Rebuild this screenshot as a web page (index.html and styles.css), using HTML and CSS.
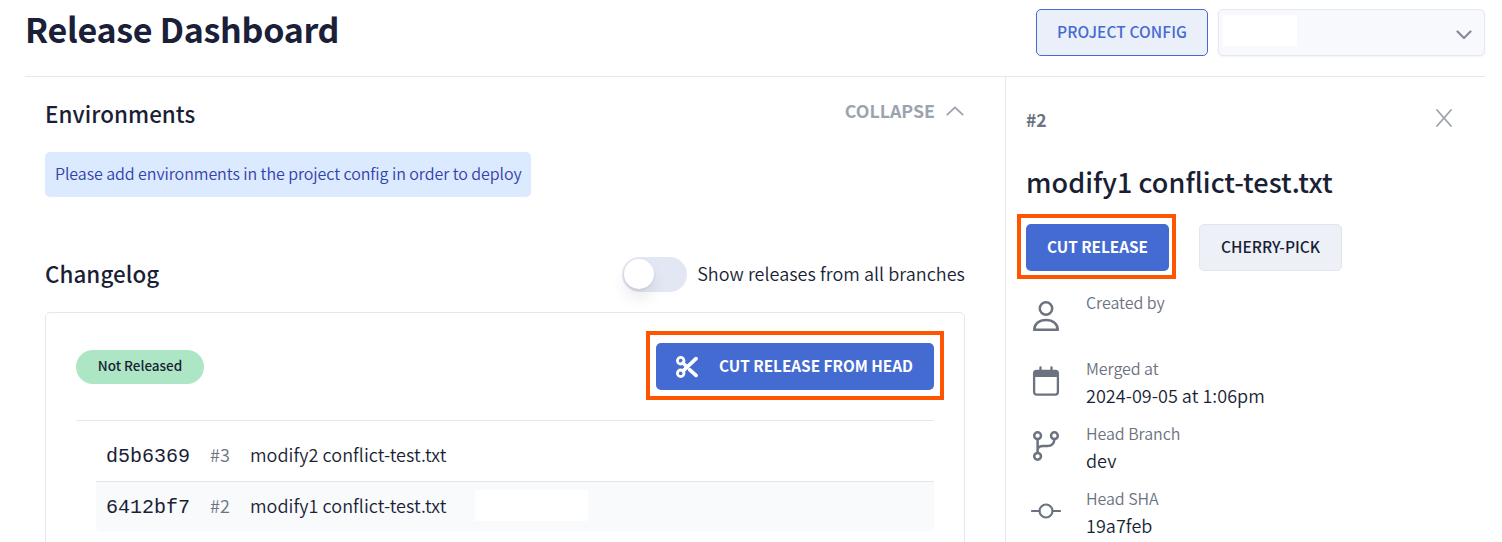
FILE: index.html
```html
<!DOCTYPE html>
<html lang="en">
<head>
<meta charset="utf-8">
<title>Release Dashboard</title>
<link rel="stylesheet" href="styles.css">
</head>
<body>
<div class="page">
  <header class="header">
    <h1 class="title">Release Dashboard</h1>
    <div class="header-actions">
      <button class="btn btn-config">PROJECT CONFIG</button>
      <div class="select">
        <span class="select-value"></span>
        <svg class="select-caret" width="16" height="10" viewBox="0 0 16 10" fill="none"><path d="M1.500 1.500 8 8l6.500-6.500" stroke="currentColor" stroke-width="2.200" stroke-linecap="round" stroke-linejoin="round"/></svg>
      </div>
    </div>
  </header>
  <div class="columns">
    <main class="main">
      <div class="section-head">
        <h2 class="heading">Environments</h2>
        <div class="collapse">
          <span class="collapse-text">COLLAPSE</span>
          <svg width="18" height="10" viewBox="0 0 18 10" fill="none"><path d="M1.300 8.700 9 1.300l7.700 7.400" stroke="currentColor" stroke-width="1.800" stroke-linecap="round" stroke-linejoin="round"/></svg>
        </div>
      </div>
      <div class="notice"><span class="notice-text">Please add environments in the project config in order to deploy</span></div>
      <div class="section-head changelog-head">
        <h2 class="heading">Changelog</h2>
        <div class="toggle-row">
          <span class="toggle"><span class="knob"></span></span>
          <span class="toggle-text">Show releases from all branches</span>
        </div>
      </div>
      <section class="card">
        <div class="card-head">
          <span class="pill"><span class="pill-text">Not Released</span></span>
          <div class="marked marked-head">
            <button class="btn btn-primary btn-head">
              <svg class="scissors" width="22" height="22" viewBox="0 0 22 22" fill="none" stroke="currentColor"><circle cx="4.700" cy="4.700" r="3.300" stroke-width="2.800"/><circle cx="4.700" cy="17.300" r="3.300" stroke-width="2.800"/><path d="M7.200 14.800 20 2.600" stroke-width="3.700" stroke-linecap="round"/><path d="m7 7 4 4M13.800 13.800l6.200 5.600" stroke-width="3.700" stroke-linecap="round"/></svg>
              <span class="head-text">CUT RELEASE FROM HEAD</span>
            </button>
          </div>
        </div>
        <div class="commits">
          <div class="commit">
            <span class="sha">d5b6369</span><span class="number">#3</span><span class="message">modify2 conflict-test.txt</span>
          </div>
          <div class="commit commit-active">
            <span class="sha">6412bf7</span><span class="number">#2</span><span class="message">modify1 conflict-test.txt</span><span class="author"></span>
          </div>
        </div>
      </section>
    </main>
    <aside class="side">
      <div class="side-top">
        <span class="side-number">#2</span>
        <svg class="close" width="16" height="18" viewBox="0 0 16 18" fill="none"><path d="m1 1 14 16M15 1 1 17" stroke="currentColor" stroke-width="1.800" stroke-linecap="round"/></svg>
      </div>
      <h2 class="side-title">modify1 conflict-test.txt</h2>
      <div class="side-actions">
        <div class="marked marked-cut"><button class="btn btn-primary btn-cut">CUT RELEASE</button></div>
        <button class="btn btn-cherry">CHERRY-PICK</button>
      </div>
      <div class="details">
        <div class="detail">
          <svg class="detail-icon" viewBox="0 0 30 30" fill="none" stroke="currentColor" stroke-width="2.500"><circle cx="15" cy="7.500" r="6.200"/><path d="M3.200 28.800C3.200 23 8 18.900 15 18.900S26.800 23 26.800 28.800Z" stroke-linejoin="round"/></svg>
          <div><div class="label label-first">Created by</div></div>
        </div>
        <div class="detail">
          <svg class="detail-icon" viewBox="0 0 30 30" fill="none" stroke="currentColor" stroke-width="2.300"><path d="M9.500 1.500V5M20.500 1.500V5" stroke-linecap="round"/><rect x="3.100" y="4.800" width="23.800" height="23.800" rx="2.500"/><path d="M3 5h24v6H3z" fill="currentColor" stroke="none"/></svg>
          <div><div class="label">Merged at</div><div class="value value-date">2024-09-05 at 1:06pm</div></div>
        </div>
        <div class="detail">
          <svg class="detail-icon" viewBox="0 0 30 30" fill="none" stroke="currentColor" stroke-width="2.500"><circle cx="6.600" cy="4.700" r="3.400"/><circle cx="23.400" cy="4.700" r="3.400"/><circle cx="6.600" cy="25.300" r="3.400"/><path d="M6.600 8v14M6.600 18.200C7.500 15.600 9.500 15 12 15h4.500c4 0 6.500-2 6.900-6.500"/></svg>
          <div><div class="label label-branch">Head Branch</div><div class="value">dev</div></div>
        </div>
        <div class="detail">
          <svg class="detail-icon" viewBox="0 0 30 30" fill="none" stroke="currentColor" stroke-width="2.100"><circle cx="15" cy="15" r="6.500"/><path d="M1 15h7.500M21.500 15H29" stroke-linecap="round"/></svg>
          <div><div class="label">Head SHA</div><div class="value">19a7feb</div></div>
        </div>
      </div>
    </aside>
  </div>
</div>
</body>
</html>
```
FILE: styles.css
```css
* { box-sizing: border-box; }
body {
  margin: 0;
  background: #fff;
  color: #1a1f36;
  font-family: "Noto Sans CJK SC", "Noto Sans", sans-serif;
}
h1, h2 { margin: 0; }
.page {
  height: 542px;
  padding: 0 17px 0 25px;
  overflow: hidden;
}
.header {
  display: flex;
  justify-content: space-between;
  height: 77px;
  border-bottom: 1px solid #e5e7eb;
}
.title {
  font-size: 34px;
  line-height: 58px;
  font-weight: 700;
  letter-spacing: -.28px;
  color: #1a2038;
  white-space: nowrap;
}
.header-actions { display: flex; gap: 10px; padding-top: 9px; }
.btn {
  height: 47px;
  padding: 0 0 4px;
  border: 1px solid transparent;
  border-radius: 5px;
  font-family: inherit;
  font-size: 15.500px;
  font-weight: 500;
  line-height: 30px;
  white-space: nowrap;
}
.btn-config {
  width: 172px;
  border-color: #446bd1;
  background: #ebeffa;
  color: #446bd1;
  letter-spacing: .1px;
}
.select {
  display: flex;
  align-items: flex-start;
  justify-content: space-between;
  width: 267px;
  height: 47px;
  padding: 5px 12px 0 4px;
  border: 1px solid #e4e8f3;
  border-radius: 5px;
  background: #f8f9fd;
  box-shadow: 0 1px 2px rgba(0, 0, 0, .05);
}
.select-value { width: 74px; height: 31px; background: #fff; }
.select-caret { margin-top: 15px; color: #858b9b; }
.columns { display: flex; }
.main { width: 980px; padding: 0 40px 0 20px; }
.section-head { display: flex; justify-content: space-between; height: 75px; }
.heading {
  padding-top: 19px;
  font-size: 22.400px;
  line-height: 34px;
  font-weight: 500;
  letter-spacing: .04px;
  white-space: nowrap;
}
.collapse {
  display: flex;
  align-items: center;
  gap: 11px;
  height: 67px;
  padding-right: 1px;
  color: #9ca3af;
}
.collapse-text { padding-bottom: 2px; font-size: 17.800px; line-height: 30px; font-weight: 700; }
.notice {
  width: 486px;
  height: 45px;
  padding: 6px 10px;
  border-radius: 5px;
  background: #dbeafe;
  color: #3341ac;
  font-size: 16px;
  line-height: 30px;
  font-weight: 350;
  letter-spacing: -.07px;
  white-space: nowrap;
}
.changelog-head { height: 75px; margin-top: 40px; }
.toggle-row { display: flex; align-items: center; gap: 10px; height: 75px; }
.toggle {
  display: flex;
  width: 65px;
  height: 35px;
  padding: 2px;
  border-radius: 18px;
  background: #e2e7f3;
}
.knob {
  width: 30px;
  height: 30px;
  border-radius: 50%;
  background: #fff;
  box-shadow: 0 10px 15px rgba(0, 0, 0, .08), 0 1px 3px rgba(0, 0, 0, .08);
}
.toggle-text {
  padding-bottom: 3px;
  font-size: 18px;
  line-height: 30px;
  font-weight: 350;
  letter-spacing: .04px;
  white-space: nowrap;
}
.card {
  height: 240px;
  padding: 30px;
  border: 1px solid #e5e7eb;
  border-radius: 5px;
}
.card-head {
  display: flex;
  justify-content: space-between;
  height: 78px;
  border-bottom: 1px solid #e5e7eb;
}
.pill {
  width: 128px;
  height: 34px;
  margin-top: 7px;
  border-radius: 17px;
  background: #ade6c4;
  text-align: center;
  font-size: 13.500px;
  line-height: 31px;
  font-weight: 500;
}
.marked { position: relative; }
.marked::after {
  content: "";
  position: absolute;
  border: 4px solid #ff5500;
}
.marked-head::after { inset: -12px -10px -10px; }
.marked-cut::after { inset: -10px -7px -8px -9px; }
.marked-head { height: 47px; }
.btn-primary { background: #446bd1; color: #fff; font-weight: 700; font-size: 15.300px; }
.btn-head { display: flex; align-items: center; gap: 21px; width: 278px; padding: 0 0 0 19px; }
.head-text { padding-bottom: 3px; }
.commits { padding: 9px 0 0 20px; }
.commit {
  display: flex;
  align-items: center;
  height: 51px;
  padding: 0 0 3px 10px;
  font-size: 18px;
  line-height: 30px;
  font-weight: 350;
  white-space: nowrap;
}
.commit-active {
  padding-bottom: 4px;
  border-top: 1px solid #e5e7eb;
  border-radius: 0 0 5px 5px;
  background: #f8fafc;
}
.sha {
  width: 104px;
  padding-top: 6px;
  font-family: "Liberation Mono", monospace;
  font-size: 20px;
}
.number { width: 40px; color: #6b7280; }
.message { width: 225px; letter-spacing: .05px; }
.author { width: 113px; height: 31px; margin-top: 1px; background: #fff; }
.side { width: 480px; height: 466px; padding: 0 33px 0 20px; border-left: 1px solid #e5e7eb; }
.side-top { display: flex; justify-content: space-between; height: 84px; padding-top: 28px; color: #6b7280; }
.side-number { font-size: 17.500px; line-height: 30px; font-weight: 700; }
.close { margin-top: 4px; color: #9ca3af; }
.side-title { padding-top: 1px; font-size: 27px; line-height: 40px; font-weight: 500; letter-spacing: .03px; white-space: nowrap; }
.side-actions { display: flex; gap: 30px; padding-top: 22px; }
.btn-cut { display: block; width: 143px; }
.btn-cherry { width: 143px; border-color: #e2e5eb; background: #edf0f7; color: #1a1f36; }
.details { padding-top: 17px; }
.detail { display: flex; gap: 25px; height: 65px; padding-left: 5px; }
.detail-icon { width: 30px; height: 30px; margin-top: 13px; color: #6b7280; }
.label { font-size: 16px; line-height: 30px; font-weight: 350; letter-spacing: -.05px; color: #6b7280; white-space: nowrap; }
.label-first { line-height: 28px; }
.value { font-size: 18px; line-height: 24px; font-weight: 350; letter-spacing: .04px; white-space: nowrap; }
```
